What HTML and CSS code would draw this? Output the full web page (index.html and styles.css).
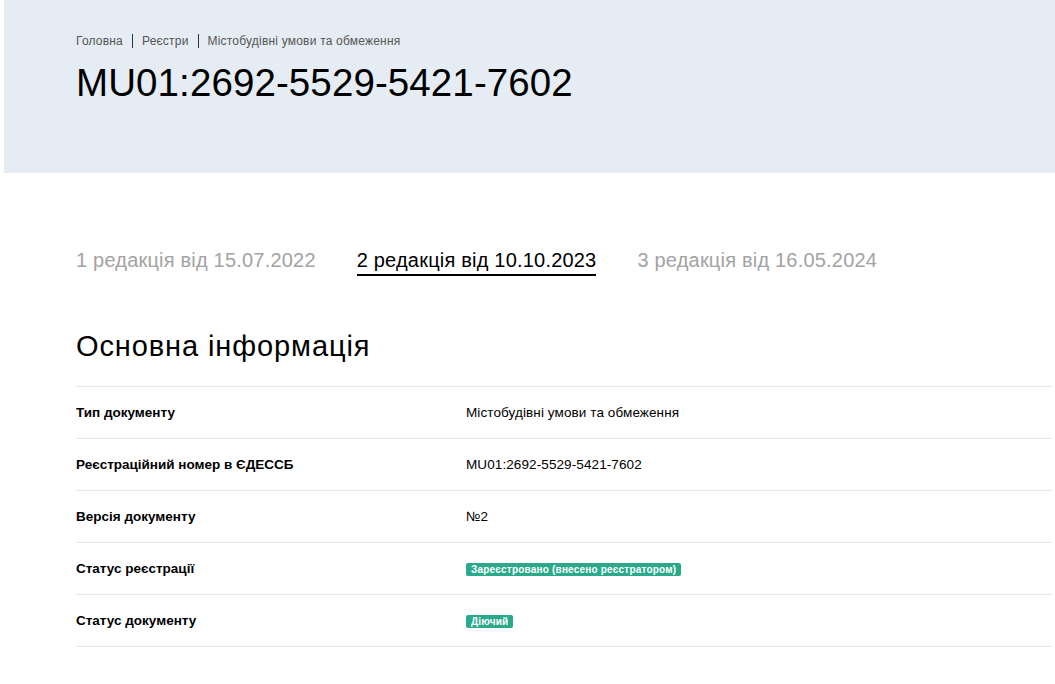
FILE: index.html
```html
<!DOCTYPE html>
<html lang="uk">
<head>
    <meta charset="UTF-8">
    <meta name="viewport" content="width=device-width, initial-scale=1.0">
    <title>MU01:2692-5529-5421-7602</title>
    <link rel="stylesheet" href="styles.css">
</head>
<body>
    <header class="page-head">
        <nav class="crumbs">
            <a href="#">Головна</a>
            <span class="crumb-sep"></span>
            <a href="#">Реєстри</a>
            <span class="crumb-sep"></span>
            <a href="#">Містобудівні умови та обмеження</a>
        </nav>
        <h1 class="doc-title">MU01:2692-5529-5421-7602</h1>
    </header>

    <main class="content">
        <div class="versions">
            <a href="#" class="version">1 редакція від 15.07.2022</a>
            <a href="#" class="version active">2 редакція від 10.10.2023</a>
            <a href="#" class="version">3 редакція від 16.05.2024</a>
        </div>

        <h2 class="section-title">Основна інформація</h2>

        <div class="info-table">
            <div class="info-row">
                <div class="info-label">Тип документу</div>
                <div class="info-value">Містобудівні умови та обмеження</div>
            </div>
            <div class="info-row">
                <div class="info-label">Реєстраційний номер в ЄДЕССБ</div>
                <div class="info-value">MU01:2692-5529-5421-7602</div>
            </div>
            <div class="info-row">
                <div class="info-label">Версія документу</div>
                <div class="info-value">№2</div>
            </div>
            <div class="info-row">
                <div class="info-label">Статус реєстрації</div>
                <div class="info-value"><span class="badge">Зареєстровано (внесено реєстратором)</span></div>
            </div>
            <div class="info-row">
                <div class="info-label">Статус документу</div>
                <div class="info-value"><span class="badge">Діючий</span></div>
            </div>
        </div>
    </main>
</body>
</html>
```

FILE: styles.css
```css
body {
    margin: 0;
    padding-left: 4px;
    font-family: "Liberation Sans", Arial, sans-serif;
    color: #000;
    background: #fff;
}
a {
    color: inherit;
    text-decoration: none;
}

/* grey band with breadcrumbs and the document number */
.page-head {
    background: #e5ecf3;
    height: 173px;
    padding: 34px 0 0 72px;
    box-sizing: border-box;
}
.crumbs {
    display: flex;
    align-items: center;
    gap: 9px;
    font-size: 12px;
    letter-spacing: 0.2px;
    color: #555;
}
.crumb-sep {
    width: 1px;
    height: 14px;
    background: #333;
}
.doc-title {
    margin: 13px 0 0;
    font-size: 38.5px;
    font-weight: normal;
    letter-spacing: 0.1px;
}

.content {
    padding: 76px 3px 40px 72px;
}

/* edition tabs */
.versions {
    display: flex;
    gap: 41px;
}
.version {
    font-size: 20px;
    letter-spacing: 0.2px;
    color: #a3a3a3;
    padding-bottom: 2px;
    border-bottom: 2px solid transparent;
}
.version.active {
    color: #000;
    border-bottom-color: #000;
}

.section-title {
    margin: 54px 0 23px;
    font-size: 29px;
    font-weight: normal;
    letter-spacing: 0.9px;
}

.info-table {
    border-top: 1px solid #e6e6e6;
}
.info-row {
    display: flex;
    align-items: center;
    height: 51px;
    border-bottom: 1px solid #e6e6e6;
    font-size: 13.5px;
}
.info-label {
    width: 390px;
    font-weight: bold;
}
.info-value {
    letter-spacing: 0.1px;
}
.badge {
    display: inline-block;
    background: #2aa98b;
    color: #fff;
    font-size: 10px;
    font-weight: bold;
    letter-spacing: 0.2px;
    padding: 1px 5px;
    border-radius: 2px;
}
```
